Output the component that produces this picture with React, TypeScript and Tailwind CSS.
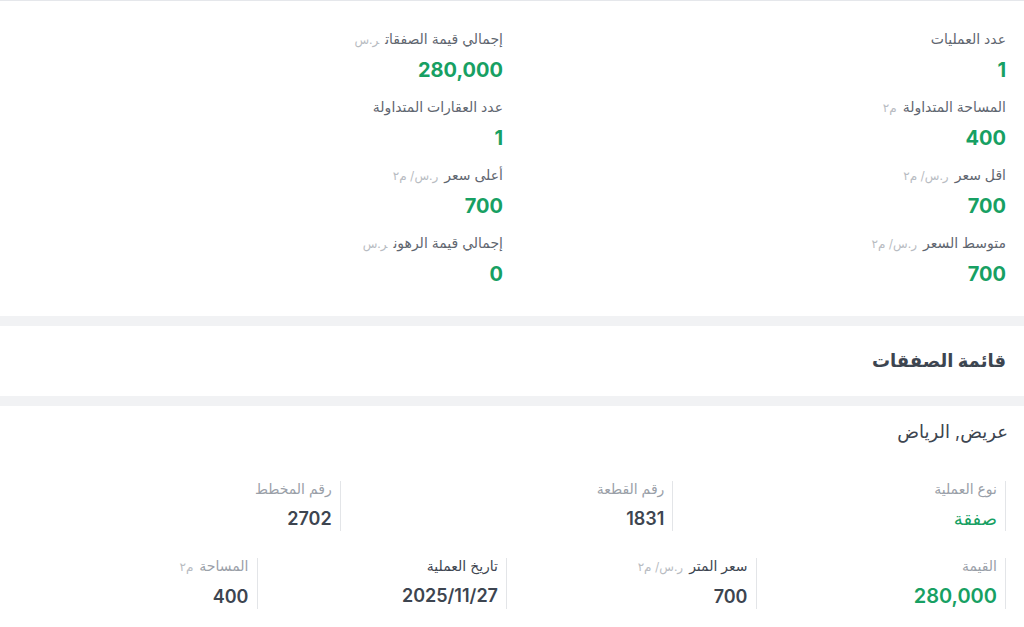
import React from "react";

const font = { fontFamily: 'Inter, "DejaVu Sans", "Noto Sans", sans-serif' };

interface IStat {
  label: string;
  unit?: string;
  value: string;
}

const stats: IStat[] = [
  { label: "عدد العمليات", value: "1" },
  { label: "إجمالي قيمة الصفقات", unit: "ر.س", value: "280,000" },
  { label: "المساحة المتداولة", unit: "م٢", value: "400" },
  { label: "عدد العقارات المتداولة", value: "1" },
  { label: "اقل سعر", unit: "ر.س/ م٢", value: "700" },
  { label: "أعلى سعر", unit: "ر.س/ م٢", value: "700" },
  { label: "متوسط السعر", unit: "ر.س/ م٢", value: "700" },
  { label: "إجمالي قيمة الرهون", unit: "ر.س", value: "0" },
];

const StatItem = ({ label, unit, value }: IStat) => (
  <div className="flex flex-col gap-[7px]">
    <div className="text-sm leading-5 text-[#5f6670]">
      {label}
      {unit && <span className="text-xs text-[#b8bcc2] mr-1.5">{unit}</span>}
    </div>
    <div className="text-xl leading-7 font-bold text-[#17a063]">{value}</div>
  </div>
);

interface IField {
  label: string;
  unit?: string;
  value: string;
  dark?: boolean;
  green?: boolean;
  big?: boolean;
  normal?: boolean;
}

const Field = ({ label, unit, value, dark, green, big, normal }: IField) => (
  <div className="flex flex-col gap-[10px] border-r border-[#e3e5e8] pr-2">
    <div className={`text-sm leading-4 ${dark ? "text-[#3d4550]" : "text-[#9aa0a8]"}`}>
      {label}
      {unit && <span className="text-xs text-[#b8bcc2] mr-1.5">{unit}</span>}
    </div>
    <div
      className={`leading-6 ${big ? "text-xl" : "text-lg"} ${normal ? "font-normal" : "font-semibold"} ${
        green ? "text-[#17a063]" : "text-[#3d4550]"
      }`}
    >
      {value}
    </div>
  </div>
);

const App = () => {
  return (
    <div dir="rtl" style={font} className="w-full min-h-[627px] bg-[#f1f2f4] border-t border-[#e5e7eb]">
      <div className="bg-white pr-[18px] pt-7 pb-7">
        <div className="grid grid-cols-2 gap-y-[13px]">
          {stats.map((s) => (
            <StatItem key={s.label} {...s} />
          ))}
        </div>
      </div>

      <div className="bg-white mt-2.5 h-[70px] flex items-center pr-[18px]">
        <h2 className="text-lg font-bold text-[#3d4550]">قائمة الصفقات</h2>
      </div>

      <div className="bg-white mt-2.5 pr-4 pl-2 pt-3 pb-12">
        <div className="text-lg leading-7 text-[#3d4550]">عريض, الرياض</div>
        <div className="pr-0.5 mt-[35px] flex flex-col gap-[27px]">
          <div className="grid grid-cols-3">
            <Field label="نوع العملية" value="صفقة" green normal />
            <Field label="رقم القطعة" value="1831" />
            <Field label="رقم المخطط" value="2702" />
          </div>
          <div className="grid grid-cols-4">
            <Field label="القيمة" value="280,000" green big />
            <Field label="سعر المتر" unit="ر.س/ م٢" value="700" dark />
            <Field label="تاريخ العملية" value="2025/11/27" dark />
            <Field label="المساحة" unit="م٢" value="400" />
          </div>
        </div>
      </div>
    </div>
  );
};

export default App;
